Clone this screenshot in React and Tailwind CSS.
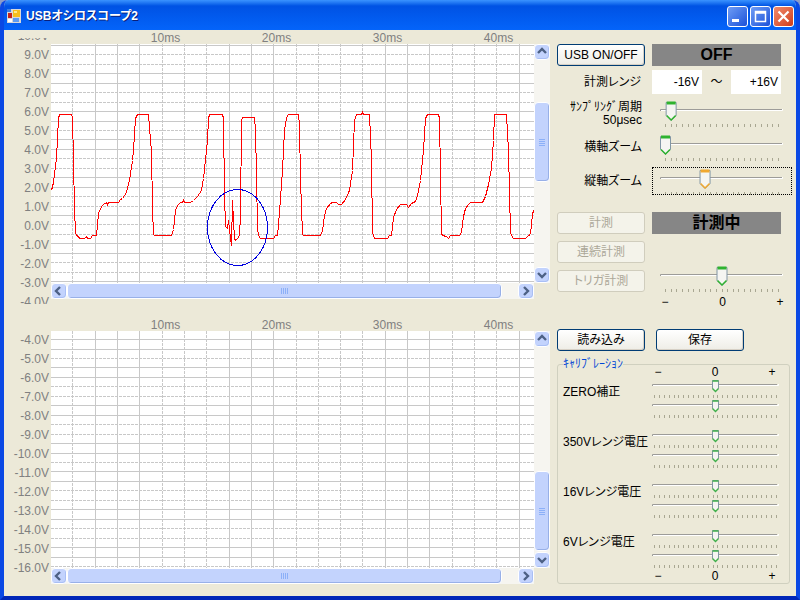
import React, { useState } from 'react';

const GRID_X = [
  [72, 1], [95, 0], [117, 0], [139, 0], [162, 1], [184, 1], [206, 1], [229, 0], [251, 0], [273, 0],
  [296, 1], [318, 1], [340, 1], [362, 1], [385, 0], [407, 0], [429, 0], [452, 1], [474, 1], [496, 1], [519, 0],
];
const TOP_Y = [
  [45, 0], [54, 1], [64, 1], [73, 0], [83, 0], [92, 1], [102, 1], [111, 0], [121, 0], [130, 1], [139, 0],
  [149, 0], [158, 1], [168, 1], [177, 0], [187, 0], [196, 1], [206, 1], [215, 0], [224, 1], [234, 1],
  [243, 0], [253, 0], [262, 1], [272, 1], [281, 0],
].map(([y, d]) => [y - 44, d]);
const BOTTOM_Y = [
  [339, 0], [349, 0], [358, 1], [367, 0], [377, 0], [386, 1], [396, 1], [405, 0], [415, 0], [424, 1],
  [434, 1], [443, 0], [453, 0], [462, 1], [471, 0], [481, 0], [490, 1], [500, 1], [509, 0], [519, 0],
  [528, 1], [538, 1], [547, 0], [557, 0], [566, 1],
].map(([y, d]) => [y - 331, d]);

const TRACE =
  '51,190 53,182 56,158 57,137 58,118 59,114 71,114 72,117 73,160 74,209 75,232 76,235 78,236 79,238 84,238 86,236 87,238 90,238 92,235 96,235 97,225 98,213 101,206 103,204 106,202 107,204 108,202 118,202 120,199 122,198 126,192 129,180 132,160 133,150 135,118 137,114 148,114 150,140 151,150 152,209 153,234 154,235 171,235 173,229 175,210 177,205 180,202 182,202 183,200 184,202 190,202 193,200 197,196 201,190 203,178 206,150 207,140 208,118 209,114 222,114 223,118 224,195 225,226 227,228 228,220 229,228 230,238 231,245 232,200 233,221 234,238 235,240 237,238 239,235 240,215 241,120 242,117 254,117 255,129 256,175 257,228 258,235 260,238 273,238 275,235 277,235 279,212 282,170 284,130 286,117 288,114 298,114 299,125 300,180 302,234 303,235 320,235 322,230 324,215 326,208 330,203 332,202 336,202 338,204 341,204 345,199 349,190 352,170 354,120 356,114 361,114 362,112 363,114 369,114 371,160 372,232 374,238 387,238 389,235 391,235 393,217 396,209 400,204 406,204 408,207 411,203 415,201 417,195 420,180 423,150 425,118 427,114 438,114 439,118 441,233 442,235 446,236 448,238 450,235 459,235 461,232 463,216 465,208 468,204 470,202 482,202 485,196 488,184 491,168 493,140 494,114 506,114 508,150 510,233 513,238 525,238 528,235 530,234 532,214 533,210';

const volts = (from, to) => Array.from({ length: from - to + 1 }, (_, i) => `${from - i}.0V`);

const ARROWS = { up: 'M4 9l4-4 4 4', down: 'M4 6l4 4 4-4', left: 'M9 4L5 8l4 4', right: 'M6 4l4 4-4 4' };

function ArrowButton({ dir }) {
  return (
    <button
      type="button"
      aria-label={dir}
      className="flex size-4 shrink-0 items-center justify-center rounded-sm border border-white bg-[#c3d3fd] shadow-[inset_-1px_-1px_0_#a9bff5]"
    >
      <svg viewBox="0 0 16 16" className="size-4 shrink-0">
        <path d={ARROWS[dir]} fill="none" stroke="#4d6185" strokeWidth="2.4" />
      </svg>
    </button>
  );
}

function HScroll() {
  return (
    <div className="flex h-4 bg-[#f6f5f0]">
      <ArrowButton dir="left" />
      <div className="flex flex-1 items-center justify-center gap-px rounded-sm border border-white bg-[#c3d3fd] shadow-[inset_-1px_-1px_0_#98b0e8]">
        {[0, 1, 2, 3].map((i) => (
          <span key={i} className="h-1.5 w-px bg-[#8cb0f8]" />
        ))}
      </div>
      <div className="w-4" />
      <ArrowButton dir="right" />
    </div>
  );
}

function VScroll({ before, after }) {
  return (
    <div className="flex w-4 flex-col bg-[#f6f5f0]">
      <ArrowButton dir="up" />
      <div style={{ flexGrow: before }} />
      <div className="flex h-20 flex-col items-center justify-center gap-px rounded-sm border border-white bg-[#c3d3fd] shadow-[inset_-1px_-1px_0_#98b0e8]">
        {[0, 1, 2, 3].map((i) => (
          <span key={i} className="h-px w-1.5 bg-[#8cb0f8]" />
        ))}
      </div>
      <div style={{ flexGrow: after }} />
      <ArrowButton dir="down" />
    </div>
  );
}

function Scope({ labels, shift, plotHeight, rows, before, after, children }) {
  return (
    <section className="grid grid-cols-[47px_1fr_16px]">
      <div className="row-span-3 mt-2 -mb-2 h-[266px] overflow-hidden pr-0.5 text-right leading-[19px] text-[#808080]">
        <div className={shift}>
          {labels.map((l) => (
            <div key={l}>{l}</div>
          ))}
        </div>
      </div>
      <div className="col-span-2 flex h-3.5 overflow-hidden pl-[59px] leading-4 text-[#808080]">
        {['10ms', '20ms', '30ms', '40ms'].map((t) => (
          <div key={t} className="w-[111px] shrink-0 text-center">{t}</div>
        ))}
      </div>
      <div className={`overflow-hidden bg-white ${plotHeight}`}>
        <svg className="block h-full w-full" shapeRendering="crispEdges">
          <g stroke="#c8c8c8" strokeWidth="1">
            {rows.map(([y, d]) => (
              <line key={y} x1="0" x2="100%" y1={y + 0.5} y2={y + 0.5} strokeDasharray={d ? '3 1' : undefined} />
            ))}
            {GRID_X.map(([x, d]) => (
              <line key={x} x1={x - 50.5} x2={x - 50.5} y1="0" y2="100%" strokeDasharray={d ? '3 1' : undefined} />
            ))}
          </g>
          {children}
        </svg>
      </div>
      <VScroll before={before} after={after} />
      <HScroll />
    </section>
  );
}

function Slider({ label, initial, accent = '#2fb32f', focused }) {
  const [v, setV] = useState(initial);
  const x = 13.5 + v * 5.65;
  return (
    <div className={`relative h-7 w-[140px] ${focused ? 'outline-1 -outline-offset-1 outline-dotted outline-black' : ''}`}>
      <svg viewBox="0 0 140 28" className="block h-7 w-[140px]">
        <path d="M8.5 12V10.5H130" fill="none" stroke="#9d9c99" />
        <path d="M9 11.5H130.5V10" fill="none" stroke="#fff" />
        {Array.from({ length: 21 }, (_, i) => (
          <rect key={i} x={Math.round(13 + i * 5.65)} y="25" width="1" height="3" fill="#a9a792" />
        ))}
        <path d={`M${x - 5} 3.5h10v13l-5 5l-5-5z`} fill="#f5f5f2" stroke="#8296a5" strokeLinejoin="round" />
        <path d={`M${x - 4.5} 4h9`} stroke={accent} strokeWidth="3" />
        <path d={`M${x - 4.5} 16.5l4.5 4.5l4.5-4.5`} fill="none" stroke={accent} strokeWidth="1.5" />
      </svg>
      <input
        type="range"
        min="0"
        max="20"
        value={v}
        aria-label={label}
        onChange={(e) => setV(+e.target.value)}
        className="absolute inset-0 h-full w-full opacity-0"
      />
    </div>
  );
}

function MiniSlider({ label }) {
  const [v, setV] = useState(13);
  const x = 3.5 + v * 4.615;
  return (
    <div className="relative h-5 w-32">
      <svg viewBox="0 0 128 20" className="block h-5 w-32">
        <path d="M0.5 7V5.5H125" fill="none" stroke="#9d9c99" />
        <path d="M1 6.5H126.5V5" fill="none" stroke="#fff" />
        {Array.from({ length: 26 }, (_, i) => (
          <rect key={i} x={Math.round(2 + i * 4.88)} y="16" width="1" height="3" fill="#a9a792" />
        ))}
        <path d={`M${x - 3} 1.5h6v8l-3 3l-3-3z`} fill="#f5f5f2" stroke="#8296a5" strokeLinejoin="round" />
        <path d={`M${x - 3} 2h6M${x - 3} 9.5l3 3l3-3`} fill="none" stroke="#3fb04a" strokeWidth="1.4" />
      </svg>
      <input
        type="range"
        min="0"
        max="26"
        value={v}
        aria-label={label}
        onChange={(e) => setV(+e.target.value)}
        className="absolute inset-0 h-full w-full opacity-0"
      />
    </div>
  );
}

function Button({ children, disabled }) {
  return (
    <button
      type="button"
      disabled={disabled}
      className="h-[22px] w-[88px] rounded-[3px] border border-[#003c74] bg-linear-to-b from-white to-[#eeede6] leading-5 shadow-[inset_-1px_-1px_0_#d6d0c5] disabled:border-[#d0cdbd] disabled:bg-[#f4f3ea] disabled:bg-none disabled:text-[#aca899] disabled:shadow-none"
    >
      {children}
    </button>
  );
}

function Status({ children }) {
  return (
    <div className="h-[22px] w-[129px] bg-[#868686] text-center text-base leading-[22px] font-bold">{children}</div>
  );
}

function Scale({ className }) {
  return (
    <div className={`flex h-3.5 justify-between leading-3.5 ${className}`}>
      <span className="w-2 text-center">−</span>
      <span>0</span>
      <span className="w-2 text-center">+</span>
    </div>
  );
}

function WindowButton({ label, color, children }) {
  return (
    <button
      type="button"
      aria-label={label}
      className={`size-[21px] rounded-[3px] border border-white ${color}`}
    >
      <svg viewBox="0 0 19 19" className="block size-[19px]">{children}</svg>
    </button>
  );
}

export default function App() {
  return (
    <div className="bg-[#8d9cc8]">
      <div className="flex min-h-screen flex-col overflow-hidden rounded-t-lg border-x-4 border-b-4 border-x-[#0a48e4] border-b-[#0026b8] bg-[#ece9d8] font-['Liberation_Sans','Noto_Sans_CJK_JP',sans-serif] text-xs text-black [font-feature-settings:'palt']">
        <header className="-mx-1 flex h-[30px] items-center bg-linear-to-b from-[#3a93ff] via-[#0052e4] via-20% to-[#0464fa] pr-1.5 pl-[7px] pt-0.5">
          <svg viewBox="0 0 14 14" className="mr-[5px] size-3.5">
            <path d="M0 0h14v14H0z" fill="#d8d8d8" />
            <path d="M0 0h4v3H0z" fill="#3f7de0" />
            <path d="M1 4h4v5H1z" fill="#c4231c" />
            <path d="M6 1h7v7H6z" fill="#f5bf1e" />
            <path d="M7 2h3v2H7z" fill="#ffe98c" />
            <path d="M6 9h6v4H6z" fill="#5d9bf2" />
            <path d="M1 10h4v3H1z" fill="#fff" />
          </svg>
          <h1 className="flex-1 text-xs font-bold text-white [text-shadow:1px_1px_0_#0a1f7a]">USBオシロスコープ2</h1>
          <div className="flex gap-0.5">
            <WindowButton label="最小化" color="bg-linear-to-br from-[#6f9cf5] to-[#1c4fd8]">
              <path d="M4 12h7v3H4z" fill="#fff" />
            </WindowButton>
            <WindowButton label="最大化" color="bg-linear-to-br from-[#6f9cf5] to-[#1c4fd8]">
              <path d="M4.5 4.5h10v10h-10zM4 6h11" fill="none" stroke="#fff" strokeWidth="1.5" />
            </WindowButton>
            <WindowButton label="閉じる" color="bg-linear-to-br from-[#f08a6c] to-[#cf3a14]">
              <path d="M4.5 4.5l10 10M14.5 4.5l-10 10" stroke="#fff" strokeWidth="2.2" />
            </WindowButton>
          </div>
        </header>

        <main className="flex flex-1 gap-[7px]">
          <div className="flex flex-1 flex-col gap-[18px]">
            <Scope labels={volts(10, -4)} shift="-mt-[11px]" plotHeight="h-[239px]" rows={TOP_Y} before={42} after={84}>
              <g transform="translate(-50.5 -43.5)" fill="none">
                <polyline points={TRACE} stroke="#ff0000" />
                <ellipse cx="237" cy="227" rx="30" ry="38" stroke="#0000e0" />
              </g>
            </Scope>
            <Scope labels={volts(-3, -16)} shift="-mt-[13px]" plotHeight="h-[237px]" rows={BOTTOM_Y} before={124} after={1} />
          </div>

          <aside className="w-[239px] shrink-0 pt-3.5">
            <div className="grid grid-cols-[88px_1fr] items-center gap-x-[7px]">
              <Button>USB ON/OFF</Button>
              <Status>OFF</Status>
            </div>
            <div className="mt-1 grid grid-cols-[88px_1fr] items-center gap-x-[7px]">
              <div className="pr-1 text-right">計測レンジ</div>
              <div className="flex w-[129px] items-center justify-between leading-6">
                <output className="w-[50px] bg-white pr-[3px] text-right">-16V</output>
                <span>～</span>
                <output className="w-[50px] bg-white pr-[3px] text-right">+16V</output>
              </div>
            </div>
            <div className="mt-[5px] grid grid-cols-[88px_1fr] items-center gap-x-[7px] gap-y-1.5">
              <div className="pt-0.5 pr-[3px] text-right leading-[13px] whitespace-nowrap">ｻﾝﾌﾟﾘﾝｸﾞ周期<br />50μsec</div>
              <Slider label="ｻﾝﾌﾟﾘﾝｸﾞ周期" initial={1} />
              <div className="pr-[3px] text-right">横軸ズーム</div>
              <Slider label="横軸ズーム" initial={0} />
              <div className="pr-[3px] text-right">縦軸ズーム</div>
              <Slider label="縦軸ズーム" initial={7} accent="#f0a830" focused />
            </div>
            <div className="mt-[17px] flex gap-[7px]">
              <div className="flex flex-col gap-[7px]">
                <Button disabled>計測</Button>
                <Button disabled>連続計測</Button>
                <Button disabled>トリガ計測</Button>
              </div>
              <div>
                <Status>計測中</Status>
                <div className="mt-[30px]">
                  <Slider label="トリガ" initial={10} />
                </div>
                <Scale className="mt-[3px] pr-2 pl-[9px]" />
              </div>
            </div>
            <div className="mt-5 flex gap-[11px]">
              <Button>読み込み</Button>
              <Button>保存</Button>
            </div>
            <fieldset className="mt-1.5 mr-1.5 rounded-[3px] border border-[#d0d0bf] pl-[5px]">
              <legend className="leading-3.5 text-[#0046d5]">ｷｬﾘﾌﾞﾚｰｼｮﾝ</legend>
              <div className="-mt-1.5 flex flex-col items-end pr-[9px]">
                <Scale className="w-32 pr-1 pl-0.5" />
                <div className="flex w-full flex-col gap-2.5">
                  {['ZERO補正', '350Vレンジ電圧', '16Vレンジ電圧', '6Vレンジ電圧'].map((l) => (
                    <div key={l} className="flex justify-between">
                      <div className="pt-1 leading-[18px] whitespace-nowrap">{l}</div>
                      <div>
                        <MiniSlider label={`${l} 1`} />
                        <MiniSlider label={`${l} 2`} />
                      </div>
                    </div>
                  ))}
                </div>
                <Scale className="w-32 pr-1 pl-0.5" />
              </div>
            </fieldset>
          </aside>
        </main>
      </div>
    </div>
  );
}
